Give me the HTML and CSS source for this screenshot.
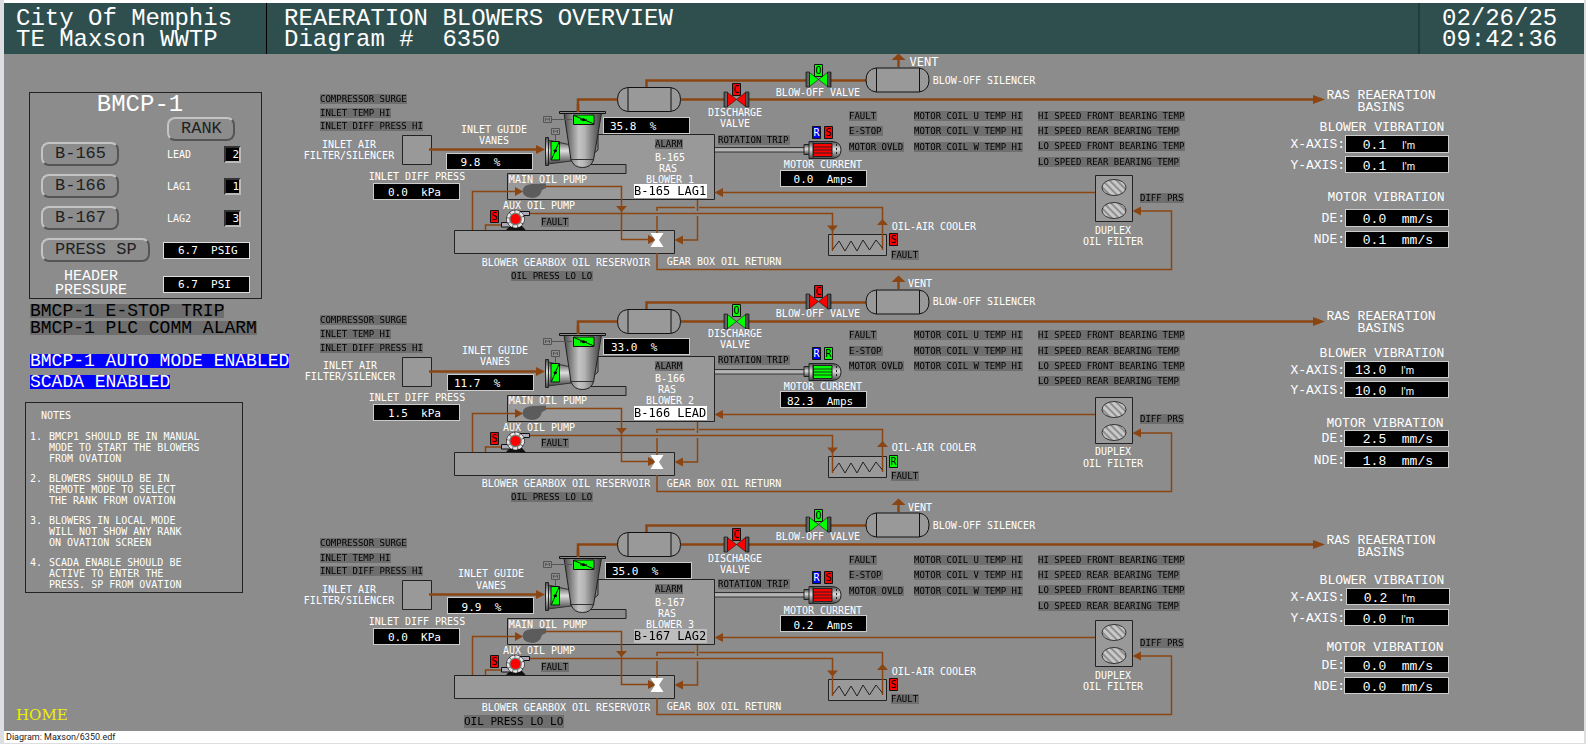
FILE: index.html
```html
<!DOCTYPE html>
<html lang="en">
<head>
<meta charset="utf-8">
<title>Reaeration Blowers Overview</title>
<link rel="stylesheet" href="styles.css">
</head>
<body>
<header class="banner">
  <div class="banner-site">City Of Memphis<br>TE Maxson WWTP</div>
  <h1 class="banner-title">REAERATION BLOWERS OVERVIEW<br>Diagram #&nbsp; 6350</h1>
  <time class="banner-clock" datetime="2025-02-26T09:42:36">02/26/25<br>09:42:36</time>
</header>
<main class="screen">
  <aside class="side">
    <section class="panel">
      <h2 class="panel-title">BMCP-1</h2>
      <div class="panel-rank"><button class="key" type="button">RANK</button></div>
      <div class="panel-grid">
        <button class="key" type="button">B-165</button><span class="rank-name">LEAD</span><output class="rank">2</output>
        <button class="key" type="button">B-166</button><span class="rank-name">LAG1</span><output class="rank">1</output>
        <button class="key" type="button">B-167</button><span class="rank-name">LAG2</span><output class="rank">3</output>
        <button class="key" type="button">PRESS SP</button><output class="reading">6.7  PSIG</output>
        <span class="panel-label">HEADER<br>PRESSURE</span><output class="reading">6.7  PSI</output>
      </div>
    </section>
    <div class="flags">
      <span class="flag">BMCP-1 E-STOP TRIP</span>
      <span class="flag">BMCP-1 PLC COMM ALARM</span>
    </div>
    <div class="modes">
      <span class="flag flag-on">BMCP-1 AUTO MODE ENABLED</span>
      <span class="flag flag-on">SCADA ENABLED</span>
    </div>
    <section class="notes">
      <h2 class="notes-title">NOTES</h2>
      <ol class="notes-list">
        <li>BMCP1 SHOULD BE IN MANUAL<br>MODE TO START THE BLOWERS<br>FROM OVATION</li>
        <li>BLOWERS SHOULD BE IN<br>REMOTE MODE TO SELECT<br>THE RANK FROM OVATION</li>
        <li>BLOWERS IN LOCAL MODE<br>WILL NOT SHOW ANY RANK<br>ON OVATION SCREEN</li>
        <li>SCADA ENABLE SHOULD BE<br>ACTIVE TO ENTER THE<br>PRESS. SP FROM OVATION</li>
      </ol>
    </section>
    <a class="home" href="#">HOME</a>
  </aside>
  <svg class="diagram" viewBox="300 54 1284 677" role="img" aria-label="Blower trains B-165, B-166 and B-167">
    <defs>
      <linearGradient id="metal" x1="0" x2="1" y1="0" y2="0">
        <stop offset="0" stop-color="#4a4a4a"/><stop offset=".4" stop-color="#c4c4c4"/><stop offset=".55" stop-color="#b4b4b4"/><stop offset="1" stop-color="#3c3c3c"/>
      </linearGradient>
      <linearGradient id="metal-v" x1="0" x2="0" y1="0" y2="1">
        <stop offset="0" stop-color="#4a4a4a"/><stop offset=".45" stop-color="#dedede"/><stop offset="1" stop-color="#444"/>
      </linearGradient>
      <pattern id="hatch" width="5" height="5" patternUnits="userSpaceOnUse" patternTransform="rotate(-45)">
        <rect width="5" height="5" fill="#c8c8c8"/><path d="M2 0V5" stroke="#555" stroke-width="1"/>
      </pattern>
      <filter id="plate" x="0" y="0" width="1" height="1" color-interpolation-filters="sRGB"><feFlood flood-color="#6e6e6e"/><feMerge><feMergeNode/><feMergeNode in="SourceGraphic"/></feMerge></filter>
      <filter id="plate-white" x="0" y="0" width="1" height="1" color-interpolation-filters="sRGB"><feFlood flood-color="#fff"/><feMerge><feMergeNode/><feMergeNode in="SourceGraphic"/></feMerge></filter>
      <filter id="plate-light" x="0" y="0" width="1" height="1" color-interpolation-filters="sRGB"><feFlood flood-color="#bebebe"/><feMerge><feMergeNode/><feMergeNode in="SourceGraphic"/></feMerge></filter>
      <g id="valve">
        <path d="M-9-7L0 0L-9 7ZM9-7L0 0L9 7Z" fill="currentColor" stroke="#111" stroke-width=".6"/>
        <path d="M-12.500-7.500h3.500v15h-3.500zM9-7.500h3.500v15h-3.500z" fill="url(#metal)" stroke="#111" stroke-width=".7"/>
      </g>
      <g id="tank">
        <path d="M10 .5H53Q63 2 63 12.500T53 24.500H10Q0 23 0 12.500T10 .5Z" fill="#999" stroke="#111"/>
        <path d="M10.500 .5V24.500M53.500 .5V24.500" stroke="#111"/>
      </g>
      <g id="motor">
        <path d="M804 144.500h6v10h-6z" fill="url(#metal-v)" stroke="#222"/>
        <path d="M809 141.500H832Q841 142 841 150T832 158.500H809Z" fill="url(#metal-v)" stroke="#222"/>
        <path d="M813 142v16" stroke="#222"/>
        <path d="M813.500 143.500h18.500v13h-18.500z" fill="currentColor" stroke="#222"/>
        <path d="M814 147h18M814 150h18M814 153h18" stroke="#222" stroke-width=".9"/>
        <path d="M836.500 144v12" stroke="#222" stroke-dasharray="2 2"/>
      </g>
      <g id="train">
        <path class="body" d="M402.500 135.500h29v29h-29z"/>
        <path class="body" d="M598 134.500H714.500V199.500H507.500V173.500H626V164.500H580L598 150Z"/>
        <path class="body" d="M454.500 230.500h220v23h-220z"/>
        <path class="body" d="M828.500 234.500h58v21h-58z"/>
        <path class="body" d="M1095.500 175.500h37v46h-37z"/>
        <ellipse cx="1114" cy="187.500" rx="12" ry="8" fill="url(#hatch)" stroke="#333"/>
        <ellipse cx="1114" cy="210.500" rx="12" ry="8" fill="url(#hatch)" stroke="#333"/>
        <path class="pipe thick" d="M429 149.500H537M578 113V99.500H617M646.500 88V80.500H806M831 80.500H866M681 99.500H724M749 99.500H1314M898.500 67V59"/>
        <path class="head" d="M536 145l9 4.500l-9 4.500zM1313 95l12 4.500l-12 4.500zM891.500 60l7-6.500l7 6.500z"/>
        <path class="pipe" d="M472.500 230V191.500H516M546 186.500H621.500V239.500H649M530 213.500H832.500V251M485.500 230V225H502"/>
        <path class="pipe" d="M657 234V216M657 211V207.500H695M699 207.500H882.500V250M697.500 200V211M697.500 216V240H682M657 253V269.500H1171.500V211H1140M1095 192.500H722"/>
        <path class="head" d="M515 187l8 4.500l-8 4.500zM616 206h11l-5.500 6zM648 235l9 4.500l-9 4.500zM683 235.500l-8.500 4.500l8.500 4.500zM827 225.500h11l-5.500 6zM877 225h11l-5.500-6zM1141 206.500l-8.500 4.500l8.500 4.500zM723 188l-8.500 4.500l8.500 4.500z"/>
        <path d="M833 249l6-8l6 10l6-10l6 10l6-11l6.500 10l6.500-10l6.500 8" fill="none" stroke="#222"/>
        <path d="M650.500 233h13l-4.500 7l4.500 7h-13l4.500-7z" fill="#fff"/>
        <path d="M546 183.500V188L542 190Q540 198 532 198Q523 197 522.500 191Q523 184.500 532 184Z" fill="#5c5c5c"/>
        <use href="#tank" x="617.500" y="87"/>
        <use href="#tank" x="866" y="67.500"/>
        <path d="M715 147.500h90M715 152h90" stroke="#333"/><path d="M715 149.800h90" stroke="#b5b5b5" stroke-width="3"/>
        <!-- inlet guide vane nozzle -->
        <path d="M548 140L571 145V161L548 164Z" fill="url(#metal-v)" stroke="#333"/>
        <path d="M545.500 137.500h3v28h-3z" fill="url(#metal-v)" stroke="#222"/>
        <path d="M551 141.500h8.500v18.500h-8.500z" fill="#0f0" stroke="#111"/>
        <path d="M551.500 159.500l7.500-17.500M553.500 150.500h3.500" stroke="#111"/><circle cx="555.300" cy="150.700" r="1.500"/>
        <!-- compressor casing -->
        <path d="M564 113H601.500L593.500 160Q591 167.500 582.500 167.500T571 160Z" fill="url(#metal)" stroke="#222"/>
        <path d="M571 159.500H593.500" stroke="#333"/>
        <path d="M559.500 111.500h46v2h-46z" fill="#888" stroke="#111"/>
        <path class="pipe thick" d="M578 112V104"/>
        <path d="M573.500 115h20.500v9.500h-20.500z" fill="#0f0" stroke="#111"/>
        <path d="M574 115.500l20 8.500M580 119.800h7" stroke="#111"/><circle cx="583.500" cy="119.800" r="1.500"/>
        <path d="M543.500 116.500h8v6h-8zM551.500 128.500h8v6h-8zM552 119.500h20M555.500 135v6M545.500 121v-3l2 2l2-2v3M553.500 133v-3l2 2l2-2v3" fill="none" stroke="#555"/>
        <!-- auxiliary pump -->
        <path d="M506 230l4-4h12l4 4.500z" fill="#111"/>
        <path d="M517 211.500h12.500v4h-12.500zM501.500 222.500h10v4.500h-10z" fill="#aab" stroke="#111"/>
        <circle cx="515.500" cy="219" r="8.800" fill="#777" stroke="#111"/>
        <circle cx="515.500" cy="219" r="7.500" fill="none" stroke="#e6e6e6" stroke-width="2.500" stroke-dasharray="4 1"/>
        <circle cx="515.500" cy="219" r="5" fill="red"/>
      </g>
      <path id="badge" d="M.5 .5h8v12h-8z" fill="currentColor" stroke="#111"/>
    </defs>

    <g class="train">
      <use href="#train"/>
      <use class="bad" href="#valve" x="736.500" y="99.500"/><use class="good" href="#valve" x="818.500" y="79.500"/><use class="bad" href="#motor"/>
      <use class="bad" href="#badge" x="732" y="83"/><use class="good" href="#badge" x="814" y="64"/>
      <use class="remote" href="#badge" x="812" y="126"/><use class="bad" href="#badge" x="824" y="126"/>
      <use class="bad" href="#badge" x="490" y="210"/><use class="bad" href="#badge" x="889" y="233"/>
      <g class="code"><text x="736.500" y="93">C</text><text x="818.500" y="74">O</text><text class="inv" x="816.500" y="136">R</text><text x="828.500" y="136">S</text><text x="494.500" y="220">S</text><text x="893.500" y="243">S</text></g>
      <g class="alarm">
        <text filter="url(#plate)" x="320" y="102">COMPRESSOR SURGE</text><text filter="url(#plate)" x="320" y="116">INLET TEMP HI</text><text filter="url(#plate)" x="320" y="129">INLET DIFF PRESS HI</text>
        <text filter="url(#plate)" x="655" y="147">ALARM</text><text filter="url(#plate)" x="718" y="143">ROTATION TRIP</text><text filter="url(#plate)" x="541" y="225">FAULT</text><text filter="url(#plate)" x="511" y="279">OIL PRESS LO LO</text>
        <text filter="url(#plate)" x="849" y="119">FAULT</text><text filter="url(#plate)" x="849" y="134">E-STOP</text><text filter="url(#plate)" x="849" y="150">MOTOR OVLD</text>
        <text filter="url(#plate)" x="914" y="119">MOTOR COIL U TEMP HI</text><text filter="url(#plate)" x="914" y="134">MOTOR COIL V TEMP HI</text><text filter="url(#plate)" x="914" y="150">MOTOR COIL W TEMP HI</text>
        <text filter="url(#plate)" x="1038" y="119">HI SPEED FRONT BEARING TEMP</text><text filter="url(#plate)" x="1038" y="134">HI SPEED REAR BEARING TEMP</text><text filter="url(#plate)" x="1038" y="149">LO SPEED FRONT BEARING TEMP</text><text filter="url(#plate)" x="1038" y="165">LO SPEED REAR BEARING TEMP</text>
        <text filter="url(#plate)" x="1140" y="201">DIFF PRS</text><text filter="url(#plate)" x="891" y="258">FAULT</text>
      </g>
      <g class="label">
        <text x="349" y="148">INLET AIR</text><text x="349" y="159">FILTER/SILENCER</text><text x="494" y="133">INLET GUIDE</text><text x="494" y="144">VANES</text><text x="417" y="180">INLET DIFF PRESS</text>
        <text x="548" y="183">MAIN OIL PUMP</text><text x="539" y="209">AUX OIL PUMP</text><text x="566" y="266">BLOWER GEARBOX OIL RESERVOIR</text><text x="724" y="265">GEAR BOX OIL RETURN</text>
        <text x="670" y="161">B-165</text><text x="668" y="172">RAS</text><text x="670" y="183">BLOWER 1</text>
        <text x="735" y="116">DISCHARGE</text><text x="735" y="127">VALVE</text><text x="818" y="96">BLOW-OFF VALVE</text><text class="wide" x="924" y="66">VENT</text><text x="984" y="84">BLOW-OFF SILENCER</text>
        <text x="823" y="168">MOTOR CURRENT</text><text x="934" y="230">OIL-AIR COOLER</text><text x="1113" y="234">DUPLEX</text><text x="1113" y="245">OIL FILTER</text>
      </g>
      <text class="tag" filter="url(#plate-white)" x="634" y="195">B-165 LAG1</text>
      <g class="box"><rect x="446.500" y="153.500" width="86" height="16"/><rect x="603.500" y="117.500" width="86" height="16"/><rect x="373.500" y="183.500" width="86" height="16"/><rect x="780.500" y="170.500" width="86" height="16"/></g>
      <g class="value"><text x="454" y="166"> 9.8  %</text><text x="610" y="130">35.8  %</text><text x="388" y="196">0.0  kPa</text><text x="787" y="183"> 0.0  Amps</text></g>
      <g class="title"><text x="1381" y="99">RAS REAERATION</text><text x="1381" y="111">BASINS</text></g>
      <g class="title"><text x="1382" y="131">BLOWER VIBRATION</text><text x="1386" y="201">MOTOR VIBRATION</text></g>
      <g class="axis"><text x="1345" y="148">X-AXIS:</text><text x="1345" y="169">Y-AXIS:</text><text x="1345" y="222">DE:</text><text x="1345" y="243">NDE:</text></g>
      <g class="box"><rect x="1345.500" y="135.500" width="103" height="17"/><rect x="1345.500" y="156.500" width="103" height="16"/><rect x="1345.500" y="209.500" width="103" height="17"/><rect x="1345.500" y="231.500" width="103" height="16"/></g>
      <g class="vib"><text x="1355" y="149"> 0.1</text><text x="1355" y="170"> 0.1</text><text x="1355" y="223"> 0.0  mm/s</text><text x="1355" y="244"> 0.1  mm/s</text></g>
      <g class="unit"><text x="1402" y="149">I'm</text><text x="1402" y="170">I'm</text></g>
    </g>

    <g class="train" transform="translate(0 222)">
      <use href="#train"/>
      <use class="good" href="#valve" x="736.500" y="99.500"/><use class="bad" href="#valve" x="818.500" y="79.500"/><use class="good" href="#motor"/>
      <use class="good" href="#badge" x="732" y="82"/><use class="bad" href="#badge" x="814" y="63"/>
      <use class="remote" href="#badge" x="812" y="125"/><use class="good" href="#badge" x="824" y="125"/>
      <use class="bad" href="#badge" x="490" y="210"/><use class="good" href="#badge" x="889" y="233"/>
      <g class="code"><text x="736.500" y="92">O</text><text x="818.500" y="73">C</text><text class="inv" x="816.500" y="135">R</text><text x="828.500" y="135">R</text><text x="494.500" y="220">S</text><text x="893.500" y="243">R</text></g>
      <g class="alarm">
        <text filter="url(#plate)" x="320" y="101">COMPRESSOR SURGE</text><text filter="url(#plate)" x="320" y="115">INLET TEMP HI</text><text filter="url(#plate)" x="320" y="129">INLET DIFF PRESS HI</text>
        <text filter="url(#plate)" x="655" y="147">ALARM</text><text filter="url(#plate)" x="718" y="141">ROTATION TRIP</text><text filter="url(#plate)" x="541" y="224">FAULT</text><text filter="url(#plate)" x="511" y="278">OIL PRESS LO LO</text>
        <text filter="url(#plate)" x="849" y="116">FAULT</text><text filter="url(#plate)" x="849" y="132">E-STOP</text><text filter="url(#plate)" x="849" y="147">MOTOR OVLD</text>
        <text filter="url(#plate)" x="914" y="116">MOTOR COIL U TEMP HI</text><text filter="url(#plate)" x="914" y="132">MOTOR COIL V TEMP HI</text><text filter="url(#plate)" x="914" y="147">MOTOR COIL W TEMP HI</text>
        <text filter="url(#plate)" x="1038" y="116">HI SPEED FRONT BEARING TEMP</text><text filter="url(#plate)" x="1038" y="132">HI SPEED REAR BEARING TEMP</text><text filter="url(#plate)" x="1038" y="147">LO SPEED FRONT BEARING TEMP</text><text filter="url(#plate)" x="1038" y="162">LO SPEED REAR BEARING TEMP</text>
        <text filter="url(#plate)" x="1140" y="200">DIFF PRS</text><text filter="url(#plate)" x="891" y="257">FAULT</text>
      </g>
      <g class="label">
        <text x="350" y="147">INLET AIR</text><text x="350" y="158">FILTER/SILENCER</text><text x="495" y="132">INLET GUIDE</text><text x="495" y="143">VANES</text><text x="417" y="179">INLET DIFF PRESS</text>
        <text x="548" y="182">MAIN OIL PUMP</text><text x="539" y="209">AUX OIL PUMP</text><text x="566" y="265">BLOWER GEARBOX OIL RESERVOIR</text><text x="724" y="265">GEAR BOX OIL RETURN</text>
        <text x="670" y="160">B-166</text><text x="667" y="171">RAS</text><text x="670" y="182">BLOWER 2</text>
        <text x="735" y="115">DISCHARGE</text><text x="735" y="126">VALVE</text><text x="818" y="95">BLOW-OFF VALVE</text><text x="920" y="65">VENT</text><text x="984" y="83">BLOW-OFF SILENCER</text>
        <text x="823" y="168">MOTOR CURRENT</text><text x="934" y="229">OIL-AIR COOLER</text><text x="1113" y="233">DUPLEX</text><text x="1113" y="245">OIL FILTER</text>
      </g>
      <text class="tag" filter="url(#plate-white)" x="634" y="195">B-166 LEAD</text>
      <g class="box"><rect x="447.500" y="152.500" width="86" height="16"/><rect x="603.500" y="116.500" width="86" height="16"/><rect x="373.500" y="182.500" width="86" height="16"/><rect x="780.500" y="169.500" width="86" height="16"/></g>
      <g class="value"><text x="454" y="165">11.7  %</text><text x="611" y="129">33.0  %</text><text x="388" y="195">1.5  kPa</text><text x="787" y="183">82.3  Amps</text></g>
      <g class="title"><text x="1381" y="98">RAS REAERATION</text><text x="1381" y="110">BASINS</text></g>
      <g class="title"><text x="1382" y="135">BLOWER VIBRATION</text><text x="1385" y="205">MOTOR VIBRATION</text></g>
      <g class="axis"><text x="1345" y="152">X-AXIS:</text><text x="1345" y="172">Y-AXIS:</text><text x="1345" y="220">DE:</text><text x="1345" y="242">NDE:</text></g>
      <g class="box"><rect x="1344.500" y="139.500" width="104" height="16"/><rect x="1344.500" y="159.500" width="104" height="16"/><rect x="1344.500" y="208.500" width="104" height="16"/><rect x="1344.500" y="229.500" width="104" height="16"/></g>
      <g class="vib"><text x="1355" y="152">13.0</text><text x="1355" y="173">10.0</text><text x="1355" y="221"> 2.5  mm/s</text><text x="1355" y="243"> 1.8  mm/s</text></g>
      <g class="unit"><text x="1401" y="152">I'm</text><text x="1401" y="173">I'm</text></g>
    </g>

    <g class="train" transform="translate(0 444)">
      <use href="#train" y="1"/>
      <use class="bad" href="#valve" x="736.500" y="100.500"/><use class="good" href="#valve" x="818.500" y="80.500"/><use class="bad" href="#motor" y="1"/>
      <use class="bad" href="#badge" x="732" y="84"/><use class="good" href="#badge" x="814" y="65"/>
      <use class="remote" href="#badge" x="812" y="127"/><use class="bad" href="#badge" x="824" y="127"/>
      <use class="bad" href="#badge" x="490" y="211"/><use class="bad" href="#badge" x="889" y="234"/>
      <g class="code"><text x="736.500" y="94">C</text><text x="818.500" y="75">O</text><text class="inv" x="816.500" y="137">R</text><text x="828.500" y="137">S</text><text x="494.500" y="221">S</text><text x="893.500" y="244">S</text></g>
      <g class="alarm">
        <text filter="url(#plate)" x="320" y="102">COMPRESSOR SURGE</text><text filter="url(#plate)" x="320" y="117">INLET TEMP HI</text><text filter="url(#plate)" x="320" y="130">INLET DIFF PRESS HI</text>
        <text filter="url(#plate)" x="655" y="148">ALARM</text><text filter="url(#plate)" x="718" y="143">ROTATION TRIP</text><text filter="url(#plate)" x="541" y="226">FAULT</text><text class="large" filter="url(#plate)" x="464" y="281">OIL PRESS LO LO</text>
        <text filter="url(#plate)" x="849" y="119">FAULT</text><text filter="url(#plate)" x="849" y="134">E-STOP</text><text filter="url(#plate)" x="849" y="150">MOTOR OVLD</text>
        <text filter="url(#plate)" x="914" y="119">MOTOR COIL U TEMP HI</text><text filter="url(#plate)" x="914" y="134">MOTOR COIL V TEMP HI</text><text filter="url(#plate)" x="914" y="150">MOTOR COIL W TEMP HI</text>
        <text filter="url(#plate)" x="1038" y="119">HI SPEED FRONT BEARING TEMP</text><text filter="url(#plate)" x="1038" y="134">HI SPEED REAR BEARING TEMP</text><text filter="url(#plate)" x="1038" y="149">LO SPEED FRONT BEARING TEMP</text><text filter="url(#plate)" x="1038" y="165">LO SPEED REAR BEARING TEMP</text>
        <text filter="url(#plate)" x="1140" y="202">DIFF PRS</text><text filter="url(#plate)" x="891" y="258">FAULT</text>
      </g>
      <g class="label">
        <text x="349" y="149">INLET AIR</text><text x="349" y="160">FILTER/SILENCER</text><text x="491" y="133">INLET GUIDE</text><text x="491" y="145">VANES</text><text x="417" y="181">INLET DIFF PRESS</text>
        <text x="548" y="184">MAIN OIL PUMP</text><text x="539" y="210">AUX OIL PUMP</text><text x="566" y="267">BLOWER GEARBOX OIL RESERVOIR</text><text x="724" y="266">GEAR BOX OIL RETURN</text>
        <text x="670" y="162">B-167</text><text x="667" y="173">RAS</text><text x="670" y="184">BLOWER 3</text>
        <text x="735" y="118">DISCHARGE</text><text x="735" y="129">VALVE</text><text x="818" y="96">BLOW-OFF VALVE</text><text x="920" y="67">VENT</text><text x="984" y="85">BLOW-OFF SILENCER</text>
        <text x="823" y="170">MOTOR CURRENT</text><text x="934" y="231">OIL-AIR COOLER</text><text x="1113" y="235">DUPLEX</text><text x="1113" y="246">OIL FILTER</text>
      </g>
      <text class="tag" filter="url(#plate-light)" x="634" y="196">B-167 LAG2</text>
      <g class="box"><rect x="447.500" y="153.500" width="86" height="16"/><rect x="605.500" y="118.500" width="86" height="16"/><rect x="373.500" y="184.500" width="86" height="16"/><rect x="780.500" y="171.500" width="86" height="16"/></g>
      <g class="value"><text x="455" y="167"> 9.9  %</text><text x="612" y="131">35.0  %</text><text x="388" y="197">0.0  KPa</text><text x="787" y="185"> 0.2  Amps</text></g>
      <g class="title"><text x="1381" y="100">RAS REAERATION</text><text x="1381" y="112">BASINS</text></g>
      <g class="title"><text x="1382" y="140">BLOWER VIBRATION</text><text x="1385" y="207">MOTOR VIBRATION</text></g>
      <g class="axis"><text x="1345" y="157">X-AXIS:</text><text x="1345" y="178">Y-AXIS:</text><text x="1345" y="225">DE:</text><text x="1345" y="246">NDE:</text></g>
      <g class="box"><rect x="1346.500" y="144.500" width="103" height="16"/><rect x="1344.500" y="165.500" width="104" height="16"/><rect x="1344.500" y="212.500" width="104" height="16"/><rect x="1344.500" y="233.500" width="104" height="16"/></g>
      <g class="vib"><text x="1356" y="158"> 0.2</text><text x="1355" y="179"> 0.0</text><text x="1355" y="226"> 0.0  mm/s</text><text x="1355" y="247"> 0.0  mm/s</text></g>
      <g class="unit"><text x="1402" y="158">I'm</text><text x="1401" y="179">I'm</text></g>
    </g>
  </svg>
</main>
<footer class="status">Diagram: Maxson/6350.edf</footer>
</body>
</html>
```
FILE: styles.css
```css
* { box-sizing: border-box; }

body {
  margin: 0;
  min-height: 100vh;
  display: flex;
  flex-direction: column;
  border: solid #dcdee2;
  border-width: 0 2px 1px 4px;
  background: #fff;
  font-family: "DejaVu Sans Mono", monospace;
}

h1, h2 { margin: 0; font-weight: normal; }

.banner {
  display: flex;
  margin-top: 3px;
  height: 51px;
  color: #fff;
  background: #2f4f4f;
  font: 24px/21px "Liberation Mono", monospace;
}
.banner-site { width: 263px; padding: 5px 12px; border-right: 1px solid #000; }
.banner-title { flex: 1; padding: 5px 17px; font: inherit; }
.banner-clock { width: 166px; padding: 5px 22px; border-left: 2px solid #223c3c; }

.screen { display: flex; background: #8c8c8c; }
.side { width: 296px; flex: none; display: flex; flex-direction: column; align-items: flex-start; padding: 38px 0 5px 21px; }
.diagram { flex: 1; min-width: 0; display: block; }

.panel { margin-left: 4px; width: 233px; height: 207px; border: 1px solid #222; padding-left: 11px; }
.panel-title { padding-right: 22px; text-align: center; color: #fff; font: 24px/24px "Liberation Mono", monospace; }
.panel-rank { padding-left: 126px; height: 25px; display: flex; }
.panel-grid { display: grid; grid-template-columns: 122px 61px 26px; row-gap: 8px; align-items: center; }

.key {
  justify-self: start;
  height: 24px;
  padding: 0 11px 0 12px;
  border: 2px solid;
  border-color: #c4c4c4 #555 #555 #c4c4c4;
  border-radius: 8px;
  background: none;
  color: #222;
  font: 17px/18px "Liberation Mono", monospace;
}
.rank-name { padding-left: 4px; color: #fff; font-size: 10px; }
.rank {
  width: 17px;
  height: 17px;
  border: 2px solid;
  border-color: #333 #bbb #bbb #333;
  background: #000;
  color: #fff;
  text-align: right;
  font-size: 11px;
  line-height: 13px;
}
.reading {
  grid-column: 2 / 4;
  width: 87px;
  height: 17px;
  padding-left: 14px;
  border: 1px solid #ddd;
  background: #000;
  color: #fff;
  font-size: 11px;
  line-height: 16px;
  white-space: pre;
}
.panel-label { width: 100px; text-align: center; color: #fff; font: 15px/14px "Liberation Mono", monospace; }

.flags, .modes { display: flex; flex-direction: column; align-items: flex-start; margin-left: 5px; }
.flags { gap: 3px; margin-top: 5px; }
.modes { gap: 7px; margin-top: 19px; }
.flag { background: #6e6e6e; color: #000; font: 18px/14px "Liberation Mono", monospace; }
.flag-on { background: #00f; color: #fff; }

.notes { width: 218px; height: 191px; margin-top: 13px; border: 1px solid #222; color: #fff; font-size: 10px; line-height: 11px; }
.notes-title { padding: 7px 15px; font: inherit; }
.notes-list { margin: 3px 0 0; padding-left: 23px; display: grid; gap: 9px; list-style: none; counter-reset: note; }
.notes-list li { counter-increment: note; }
.notes-list li::before { content: counter(note) "."; float: left; margin-left: -19px; }

.home { margin-top: auto; margin-left: -9px; color: #ee0; text-decoration: none; font: 15px/22px "DejaVu Serif", serif; }

.status { padding-left: 2px; font: 9px/12px Roboto, sans-serif; color: #222; }

.diagram text { white-space: pre; }
.body { fill: #999; stroke: #222; }
.pipe { fill: none; stroke: #8b4513; stroke-width: 1.5; }
.thick { stroke-width: 2.5; }
.head { fill: #8b4513; }
.good { color: #0f0; }
.bad { color: #f00; }
.remote { color: #00f; }
.code { font-size: 10px; text-anchor: middle; }
.inv { fill: #fff; }
.alarm { font-size: 9px; }
.large { font-size: 11px; }
.label { font-size: 10px; fill: #fff; text-anchor: middle; }
.wide { font-size: 12px; }
.tag { font-size: 12px; }
.box { fill: #000; stroke: #ccc; }
.value { font-size: 11px; fill: #fff; }
.title, .axis, .vib { font-family: "Liberation Mono", monospace; font-size: 13px; fill: #fff; }
.title { text-anchor: middle; }
.axis { text-anchor: end; }
.unit { font-family: "Liberation Sans", sans-serif; font-size: 10px; fill: #fff; }
```
